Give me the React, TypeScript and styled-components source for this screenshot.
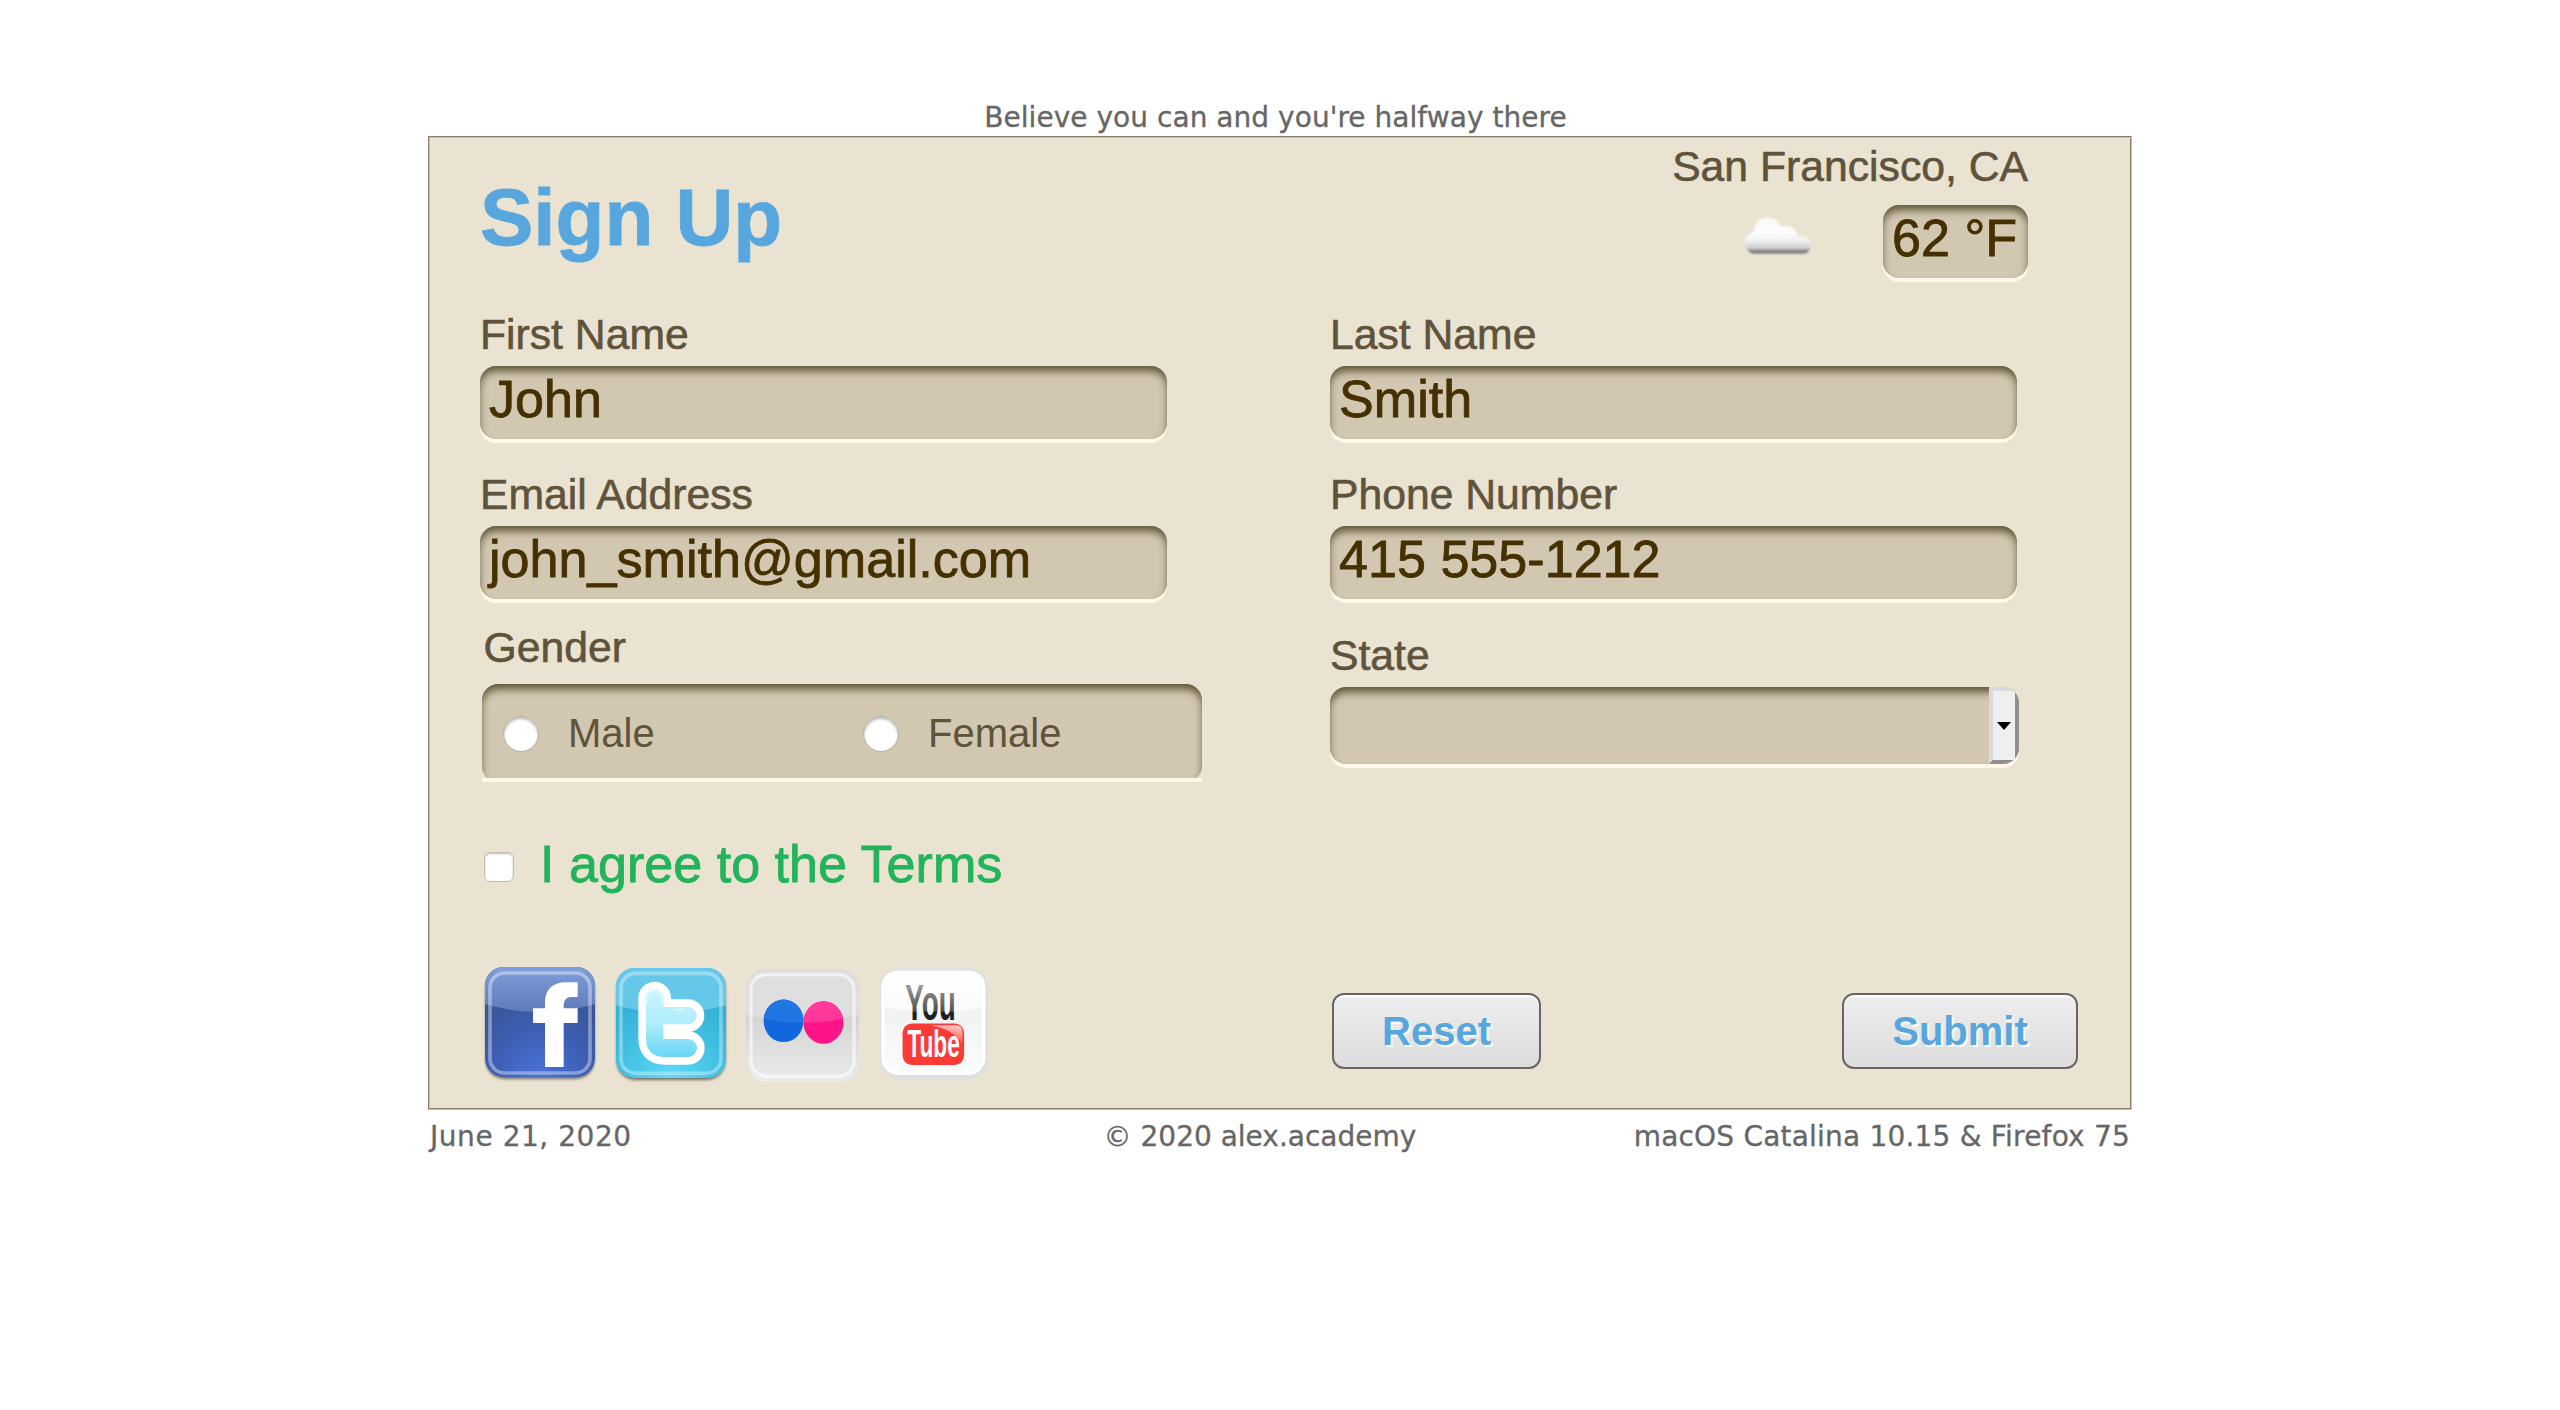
import React from "react";
import styled, { createGlobalStyle } from "styled-components";

const sans = `"Liberation Sans", Arial, Helvetica, sans-serif`;
const verdana = `"DejaVu Sans", Verdana, sans-serif`;
const well = `inset 0 6px 9px -1px #5c5034`;

const Global = createGlobalStyle`
  * { box-sizing: border-box; }
  body { margin: 0; background: #fff; }
`;

const Page = styled.div`
  width: 1704px;
  margin: 0 auto;
  padding-top: 100px;
`;

const Tagline = styled.p`
  margin: 0;
  padding-right: 9px;
  text-align: center;
  font: 28px/36px ${verdana};
  letter-spacing: 0.04px;
  -webkit-text-stroke: 0.3px #666;
  color: #666;
`;

const Panel = styled.form`
  height: 974px;
  border: 1px solid;
  border-color: #887f6f #c9bfae #c9bfae #887f6f;
  box-shadow: inset 1px 1px 0 #c9bfae, inset -1px -1px 0 #887f6f;
  background: #eae3d1;
  padding: 1px;
`;

const Header = styled.header`
  display: flex;
  justify-content: space-between;
  align-items: flex-start;
  height: 171px;
  padding: 0 102px 0 50px;
`;

const Title = styled.h1`
  margin: 34px 0 0;
  font: bold 80px/92px ${sans};
  color: #58a6de;
  -webkit-text-stroke: 0.8px #58a6de;
`;

const Weather = styled.div`
  display: flex;
  flex-direction: column;
  align-items: flex-end;
  padding-top: 3px;
`;

const WeatherRow = styled.div`
  display: flex;
  gap: 71px;
  margin-top: 14px;
`;

const CloudIcon = styled.svg`
  width: 69px;
  height: 39px;
  margin-top: 11px;
  overflow: visible;
`;

const Label = styled.span`
  display: block;
  font: 42.7px/50px ${sans};
  color: #5f533c;
  -webkit-text-stroke: 0.6px #5f533c;
  white-space: nowrap;
`;

const Well = styled.div<{ $w: number }>`
  width: ${(p) => p.$w}px;
  height: 73px;
  padding: 0 9px;
  border-radius: 16px;
  background: #d2c7b1;
  box-shadow: ${well}, 0 4px 0 #fff7e8;
  font: 52.1px/66px ${sans};
  color: #443000;
  -webkit-text-stroke: 0.8px #443000;
  white-space: nowrap;
`;

const Fields = styled.div`
  display: grid;
  grid-template-columns: 850px 1fr;
  padding-left: 50px;
`;

const Column = styled.div`
  display: flex;
  flex-direction: column;
`;

const Field = styled.div<{ $top?: number; $gap?: number; $indent?: number }>`
  display: flex;
  flex-direction: column;
  gap: ${(p) => p.$gap ?? 7}px;
  margin-top: ${(p) => p.$top ?? 0}px;
  padding-left: ${(p) => p.$indent ?? 0}px;
`;

const Legend = styled(Label)`
  padding-left: 1.5px;
`;

const GenderFrame = styled.div`
  width: 720px;
  height: 98px;
  overflow: hidden;
  border-bottom: 4px solid #fff7e8;
`;

const GenderWell = styled.div`
  display: grid;
  grid-template-columns: 360px 1fr;
  height: 98px;
  padding: 32px 0 0 21px;
  border-radius: 16px;
  background: #d2c7b1;
  box-shadow: ${well};
`;

const Option = styled.label`
  display: flex;
  gap: 29px;
  font: 40px/34px ${sans};
  color: #5f533c;
`;

const Radio = styled.span`
  width: 36px;
  height: 36px;
  border-radius: 50%;
  border: 1px solid #b5b0a8;
  background: #fff;
  box-shadow: inset 0 2px 3px #bbb;
`;

const Select = styled.div`
  display: flex;
  justify-content: flex-end;
  width: 689px;
  height: 77px;
  overflow: hidden;
  border-radius: 16px;
  background: #d2c7b1;
  box-shadow: ${well}, 0 4px 0 #fff7e8;
`;

const SelectButton = styled.span`
  display: flex;
  align-items: center;
  justify-content: center;
  width: 30px;
  border: 4px solid;
  border-color: #dadada #8f8f8f #8f8f8f #dadada;
  background: #efefef;
`;

const Terms = styled.label`
  display: flex;
  gap: 26px;
  margin: 52px 0 0 54px;
  font: 52.1px/60px ${sans};
  color: #22b35b;
  -webkit-text-stroke: 0.8px #22b35b;
`;

const Checkbox = styled.span`
  width: 30px;
  height: 30px;
  margin-top: 18px;
  border: 1px solid #c4bfb5;
  border-radius: 6px;
  background: #fff;
  box-shadow: inset 0 1px 2px #bbb;
`;

const Actions = styled.div`
  display: grid;
  grid-template-columns: 847px 1fr;
  margin: 73px 52px 0 55px;
`;

const Social = styled.div`
  display: flex;
  align-items: flex-start;
`;

const SocialIcon = styled.svg<{ $w: number; $h: number; $top: number; $left: number }>`
  width: ${(p) => p.$w}px;
  height: ${(p) => p.$h}px;
  margin: ${(p) => p.$top}px 0 0 ${(p) => p.$left}px;
  overflow: visible;
`;

const Buttons = styled.div`
  display: flex;
  justify-content: space-between;
  align-items: flex-start;
  padding-top: 26px;
`;

const Button = styled.button<{ $w: number }>`
  width: ${(p) => p.$w}px;
  height: 76px;
  padding: 0 0 1px;
  border: 2px solid #666;
  border-radius: 12px;
  background: linear-gradient(#eee, #dcdcdc);
  box-shadow: inset 0 2px 0 #fff;
  font: bold 40px/40px ${sans};
  color: #58a6de;
  text-shadow: 2px 2px 0 #fff;
`;

const Footer = styled.footer`
  display: grid;
  grid-template-columns: 548px 568px 1fr;
  margin-top: 9px;
  font: 28px/36px ${verdana};
  color: #666;
  -webkit-text-stroke: 0.3px #666;
  white-space: nowrap;
`;

const FootCell = styled.span<{ $align: string; $track?: number }>`
  text-align: ${(p) => p.$align};
  letter-spacing: ${(p) => p.$track ?? 0}px;
  padding: 0 2px;
`;

function Cloud() {
  return (
    <CloudIcon viewBox="0 0 205 115">
      <defs>
        <linearGradient id="cloud" x1="0" y1="0" x2="0" y2="1">
          <stop offset="0" stopColor="#f8f8f8" />
          <stop offset=".4" stopColor="#fefefe" />
          <stop offset=".65" stopColor="#f0f0f0" />
          <stop offset=".84" stopColor="#d0d0d0" />
          <stop offset=".9" stopColor="#9c9c9c" />
          <stop offset=".95" stopColor="#6c6c6c" />
          <stop offset="1" stopColor="#999" />
        </linearGradient>
        <filter id="soft" x="-10%" y="-10%" width="120%" height="120%"><feGaussianBlur stdDeviation="2.4" /></filter>
      </defs>
      <path filter="url(#soft)" fill="url(#cloud)" d="M30 112C14 106 2 90 3 74C5 62 16 51 33 46C32 22 48 3 72 3C92 3 104 14 112 30C136 24 156 36 164 60C186 56 203 68 203 84C202 98 194 108 184 112Z" />
    </CloudIcon>
  );
}

function Facebook() {
  return (
    <SocialIcon $w={110} $h={110} $top={0} $left={0} viewBox="0 0 330 330">
      <defs>
        <radialGradient id="fb" cx=".5" cy="1" r=".8">
          <stop offset="0" stopColor="#4a72d8" />
          <stop offset=".55" stopColor="#3d5fb3" />
          <stop offset="1" stopColor="#385595" />
        </radialGradient>
        <linearGradient id="fbGloss" x1="0" y1="0" x2="0" y2="1">
          <stop offset="0" stopColor="#7f9edb" />
          <stop offset="1" stopColor="#5f7bba" />
        </linearGradient>
        <filter id="drop" x="-10%" y="-10%" width="120%" height="125%"><feGaussianBlur stdDeviation="4" /></filter>
        <clipPath id="fbClip"><rect width="330" height="330" rx="56" /></clipPath>
      </defs>
      <rect x="2" y="8" width="326" height="328" rx="56" fill="#55503f" opacity=".8" filter="url(#drop)" />
      <g clipPath="url(#fbClip)">
        <rect width="330" height="330" fill="url(#fb)" />
        <path d="M0 0H330V112Q165 158 0 112Z" fill="url(#fbGloss)" />
      </g>
      <rect x="15" y="18" width="300" height="300" rx="44" fill="none" stroke="#fff" strokeWidth="11" opacity=".38" />
      <path fill="#fff" d="M278 46V90H258C242 90 236 100 236 124H278V168H236V300H180V168H144V124H180V110C180 70 200 46 245 46Z" />
    </SocialIcon>
  );
}

function Twitter() {
  return (
    <SocialIcon $w={110} $h={110} $top={1} $left={21} viewBox="0 0 330 330">
      <defs>
        <radialGradient id="tw" cx=".5" cy="1" r=".75">
          <stop offset="0" stopColor="#5ed8f6" />
          <stop offset="1" stopColor="#31b1d6" />
        </radialGradient>
        <linearGradient id="twBird" x1="0" y1="0" x2="0" y2="1">
          <stop offset="0" stopColor="#c9f5fd" />
          <stop offset=".5" stopColor="#b0edfb" />
          <stop offset="1" stopColor="#68d6f6" />
        </linearGradient>
        <clipPath id="twClip"><rect width="330" height="330" rx="56" /></clipPath>
      </defs>
      <rect x="2" y="8" width="326" height="328" rx="56" fill="#55503f" opacity=".8" filter="url(#drop)" />
      <g clipPath="url(#twClip)">
        <rect width="330" height="330" fill="url(#tw)" />
        <path d="M0 0H330V112Q165 158 0 112Z" fill="#66c8e9" />
      </g>
      <rect x="15" y="16" width="300" height="300" rx="44" fill="none" stroke="#fff" strokeWidth="11" opacity=".35" />
      <path
        d="M90 90A26 26 0 0 1 142 90V117H216A26 26 0 0 1 216 169H142V213H216A27 27 0 0 1 216 267H144Q90 265 90 211Z"
        fill="url(#twBird)" stroke="#fff" strokeWidth="46" strokeLinejoin="round" paintOrder="stroke"
      />
      <path d="M95 108V90A21 21 0 0 1 137 90V108" fill="none" stroke="#fff" strokeWidth="3" opacity=".7" />
      <path d="M160 122H216Q200 130 186 128Z" fill="#fff" opacity=".5" />
    </SocialIcon>
  );
}

function Flickr() {
  return (
    <SocialIcon $w={113} $h={113} $top={2} $left={20} viewBox="0 0 340 338">
      <defs>
        <linearGradient id="fl" x1="0" y1="0" x2="0" y2="1">
          <stop offset=".35" stopColor="#d0d0d0" />
          <stop offset="1" stopColor="#ececec" />
        </linearGradient>
        <clipPath id="flClip"><rect width="340" height="338" rx="58" /></clipPath>
        <clipPath id="flGloss"><path d="M0 0H340V135Q170 187 0 135Z" /></clipPath>
      </defs>
      <g clipPath="url(#flClip)">
        <rect width="340" height="338" fill="url(#fl)" />
        <path d="M0 0H340V135Q170 187 0 135Z" fill="#dfdfdf" />
      </g>
      <ellipse cx="113" cy="155" rx="60" ry="64" fill="#1167db" />
      <ellipse cx="233" cy="160" rx="60" ry="64" fill="#ff1388" />
      <g clipPath="url(#flGloss)">
        <ellipse cx="113" cy="155" rx="60" ry="64" fill="#2077e4" />
        <ellipse cx="233" cy="160" rx="60" ry="64" fill="#ff389a" />
      </g>
      <rect x="15" y="16" width="310" height="306" rx="46" fill="none" stroke="#fff" strokeWidth="10" opacity=".6" />
    </SocialIcon>
  );
}

function YouTube() {
  return (
    <SocialIcon $w={109} $h={111} $top={1} $left={20} viewBox="0 0 328 334">
      <defs>
        <linearGradient id="ytBg" x1="0" y1="0" x2="0" y2="1">
          <stop offset="0" stopColor="#fff" />
          <stop offset=".4" stopColor="#f1f3f3" />
          <stop offset="1" stopColor="#fcfcfc" />
        </linearGradient>
        <linearGradient id="ytYou" gradientUnits="userSpaceOnUse" x1="0" y1="53" x2="0" y2="156">
          <stop offset="0" stopColor="#999" />
          <stop offset=".75" stopColor="#505050" />
          <stop offset=".77" stopColor="#1c1c1c" />
          <stop offset="1" stopColor="#222" />
        </linearGradient>
        <linearGradient id="ytShine" x1="1" y1="0" x2=".6" y2="1">
          <stop offset="0" stopColor="#fff" stopOpacity=".8" />
          <stop offset="1" stopColor="#fff" stopOpacity="0" />
        </linearGradient>
      </defs>
      <rect width="328" height="334" rx="58" fill="#dfdfdf" />
      <rect x="7" y="8" width="313" height="314" rx="52" fill="url(#ytBg)" />
      <path d="M7 60Q7 8 59 8H268Q320 8 320 60V116Q164 152 7 116Z" fill="#fff" opacity=".6" />
      <rect x="12" y="13" width="303" height="304" rx="46" fill="none" stroke="#fff" strokeWidth="9" />
      <text x="79" y="156" textLength="152" lengthAdjust="spacingAndGlyphs" fontFamily="Liberation Sans Narrow, Liberation Sans, sans-serif" fontWeight="bold" fontSize="150" fill="url(#ytYou)">You</text>
      <rect x="71" y="167" width="185" height="125" rx="28" fill="#fb3a36" />
      <path d="M150 172H232Q251 172 251 192V230Q225 182 150 172Z" fill="url(#ytShine)" />
      <text x="85" y="269" textLength="158" lengthAdjust="spacingAndGlyphs" fontFamily="Liberation Sans Narrow, Liberation Sans, sans-serif" fontWeight="bold" fontSize="118" fill="#fff">Tube</text>
    </SocialIcon>
  );
}

export default function App() {
  return (
    <>
      <Global />
      <Page>
        <Tagline>Believe you can and you're halfway there</Tagline>
        <Panel>
          <Header>
            <Title>Sign Up</Title>
            <Weather>
              <Label>San Francisco, CA</Label>
              <WeatherRow>
                <Cloud />
                <Well $w={145}>62 °F</Well>
              </WeatherRow>
            </Weather>
          </Header>
          <Fields>
            <Column>
              <Field>
                <Label>First Name</Label>
                <Well $w={687}>John</Well>
              </Field>
              <Field $top={30}>
                <Label>Email Address</Label>
                <Well $w={687}>john_smith@gmail.com</Well>
              </Field>
              <Field $top={23} $gap={12} $indent={2}>
                <Legend>Gender</Legend>
                <GenderFrame>
                  <GenderWell>
                    <Option><Radio />Male</Option>
                    <Option><Radio />Female</Option>
                  </GenderWell>
                </GenderFrame>
              </Field>
            </Column>
            <Column>
              <Field>
                <Label>Last Name</Label>
                <Well $w={687}>Smith</Well>
              </Field>
              <Field $top={30}>
                <Label>Phone Number</Label>
                <Well $w={687}>415 555-1212</Well>
              </Field>
              <Field $top={31}>
                <Label>State</Label>
                <Select>
                  <SelectButton>
                    <svg width="14" height="8" viewBox="0 0 14 8"><path d="M0 0H14L7 8Z" /></svg>
                  </SelectButton>
                </Select>
              </Field>
            </Column>
          </Fields>
          <Terms><Checkbox />I agree to the Terms</Terms>
          <Actions>
            <Social>
              <Facebook />
              <Twitter />
              <Flickr />
              <YouTube />
            </Social>
            <Buttons>
              <Button type="reset" $w={209}>Reset</Button>
              <Button type="button" $w={236}>Submit</Button>
            </Buttons>
          </Actions>
        </Panel>
        <Footer>
          <FootCell $align="left" $track={0.55}>June 21, 2020</FootCell>
          <FootCell $align="center">© 2020 alex.academy</FootCell>
          <FootCell $align="right" $track={0.2}>macOS Catalina 10.15 &amp; Firefox 75</FootCell>
        </Footer>
      </Page>
    </>
  );
}
